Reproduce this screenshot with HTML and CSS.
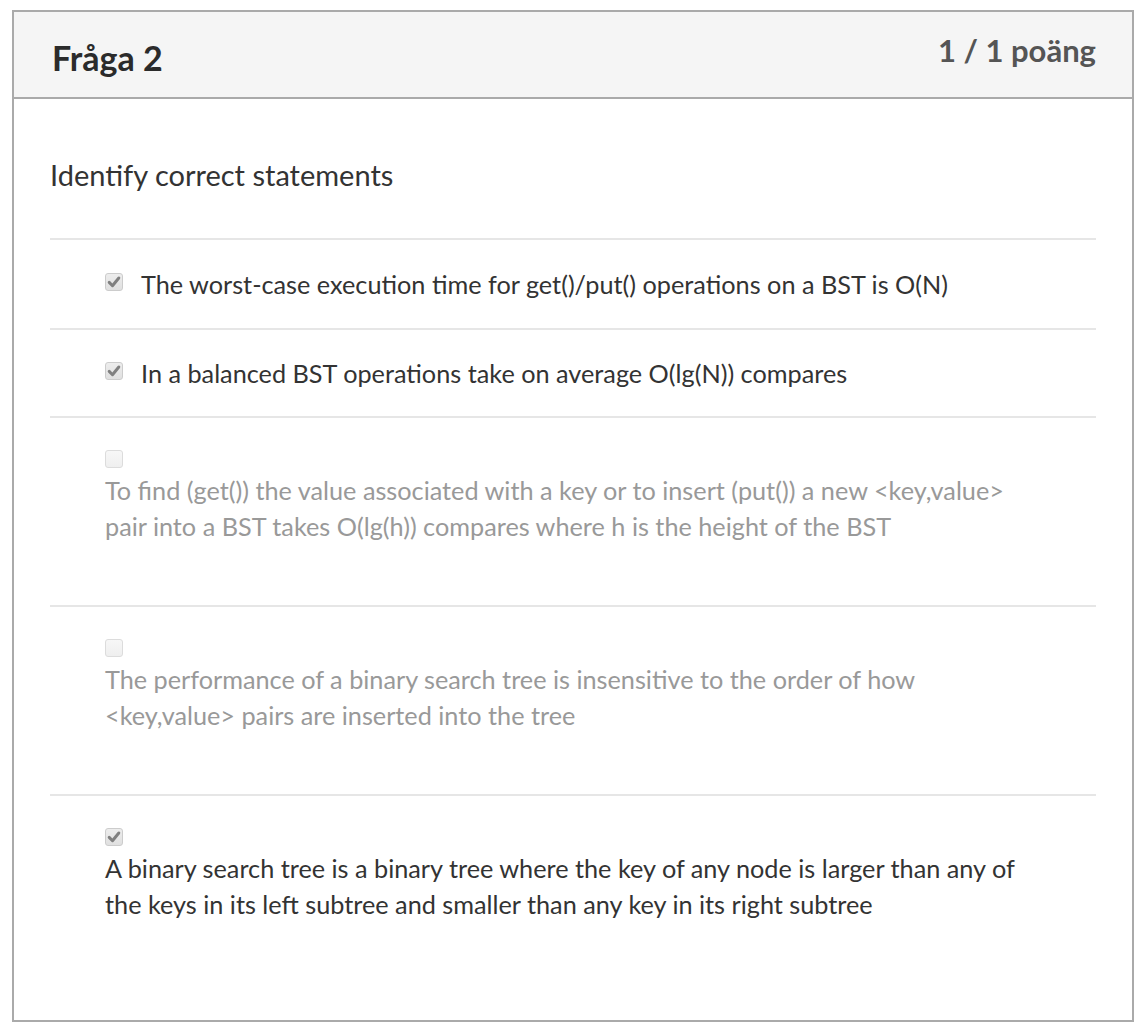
FILE: index.html
```html
<!DOCTYPE html>
<html lang="sv">
<head>
<meta charset="utf-8">
<title>Fråga 2</title>
<link rel="stylesheet" href="styles.css">
</head>
<body>
<div class="question">
  <div class="header">
    <h2 class="title">Fråga 2</h2>
    <div class="points">1 / 1 poäng</div>
  </div>
  <div class="content">
    <p class="prompt">Identify correct statements</p>
    <div class="answers">
      <div class="answer row correct">
        <span class="cb checked"><svg viewBox="0 0 18 18" width="18" height="18"><path d="M4.2 9.4 L7.5 12.7 L13.8 5.0" fill="none" stroke="#808080" stroke-width="3" stroke-linecap="round" stroke-linejoin="round"/></svg></span>
        <span class="text">The worst-case execution time for get()/put() operations on a BST is O(N)</span>
      </div>
      <div class="answer row correct short">
        <span class="cb checked"><svg viewBox="0 0 18 18" width="18" height="18"><path d="M4.2 9.4 L7.5 12.7 L13.8 5.0" fill="none" stroke="#808080" stroke-width="3" stroke-linecap="round" stroke-linejoin="round"/></svg></span>
        <span class="text">In a balanced BST operations take on average O(lg(N)) compares</span>
      </div>
      <div class="answer stack muted">
        <span class="cb"></span>
        <span class="text">To find (get()) the value associated with a key or to insert (put()) a new &lt;key,value&gt; pair into a BST takes O(lg(h)) compares where h is the height of the BST</span>
      </div>
      <div class="answer stack muted">
        <span class="cb"></span>
        <span class="text">The performance of a binary search tree is insensitive to the order of how &lt;key,value&gt; pairs are inserted into the tree</span>
      </div>
      <div class="answer stack last">
        <span class="cb checked"><svg viewBox="0 0 18 18" width="18" height="18"><path d="M4.2 9.4 L7.5 12.7 L13.8 5.0" fill="none" stroke="#808080" stroke-width="3" stroke-linecap="round" stroke-linejoin="round"/></svg></span>
        <span class="text">A binary search tree is a binary tree where the key of any node is larger than any of the keys in its left subtree and smaller than any key in its right subtree</span>
      </div>
    </div>
  </div>
</div>
</body>
</html>
```

FILE: styles.css
```css
* { box-sizing: border-box; }
html, body { margin: 0; background: #fff; }
body {
  padding: 10px 12px 6px 12px;
  font-family: Lato, "Open Sans", sans-serif;
  color: #333;
}
.question {
  border: 2px solid #aaa;
  height: 1012px;
  display: flex;
  flex-direction: column;
}
.header {
  background: #f5f5f5;
  border-bottom: 2px solid #aaa;
  height: 87px;
  display: flex;
  justify-content: space-between;
  align-items: flex-start;
  padding: 0 36px 0 38px;
}
.title {
  margin: 0;
  padding-top: 26px;
  font-size: 34px;
  line-height: 40px;
  font-weight: 700;
  color: #2b2b2b;
}
.points {
  padding-top: 20px;
  font-size: 31px;
  line-height: 36px;
  font-weight: 700;
  color: #555;
}
.content {
  padding: 0 36px;
}
.prompt {
  margin: 0;
  padding-top: 58px;
  padding-bottom: 45px;
  font-size: 29px;
  line-height: 36px;
  color: #333;
}
.answer {
  border-top: 2px solid #e6e6e6;
  padding-left: 55px;
  font-size: 25.25px;
  line-height: 36px;
}
.answer.row {
  display: flex;
  align-items: center;
  gap: 18px;
  padding-top: 26px;
  padding-bottom: 26px;
}
.answer.row.short {
  padding-top: 25px;
  padding-bottom: 25px;
}
.answer.stack {
  display: flex;
  flex-direction: column;
  align-items: flex-start;
  gap: 4px;
  padding-top: 32px;
  padding-bottom: 61px;
  padding-right: 66px;
}
.answer.last { padding-bottom: 0; }
.answer.muted { color: #999; }
.cb {
  width: 18px;
  height: 18px;
  flex: 0 0 18px;
  border: 1px solid #dcdcdc;
  border-radius: 3px;
  background: linear-gradient(#f7f7f7, #efefef);
  display: block;
  position: relative;
}
.cb.checked {
  border-color: #cccccc;
  background: linear-gradient(#ededed, #e0e0e0);
}
.cb svg {
  position: absolute;
  left: -1px;
  top: -1px;
}
.answer.row .cb { margin-top: -4px; }
```
